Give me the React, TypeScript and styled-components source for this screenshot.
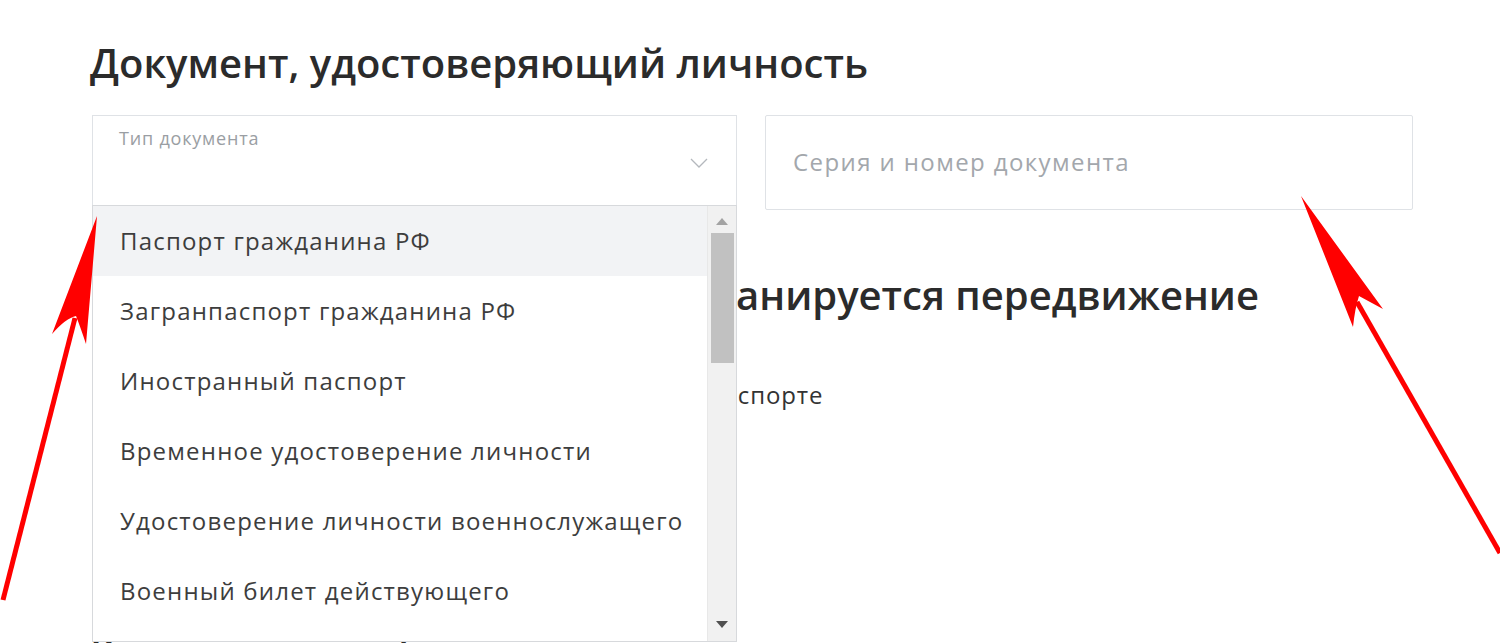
import styled, { createGlobalStyle } from "styled-components";

const GlobalStyle = createGlobalStyle`
    body {
        margin: 0;
        background: #ffffff;
        font-family: 'Open Sans', 'Noto Sans', sans-serif;
        color: #2e2e2e;
        overflow: hidden;
    }
`;

const Page = styled.div`
    position: relative;
    width: 1500px;
    height: 643px;
    overflow: hidden;
    padding: 34px 0 0 92px;
    box-sizing: border-box;
`;

const Heading = styled.h2<{ $top?: number }>`
    margin: ${p => p.$top ?? 0}px 0 0 -2px;
    font-size: 40px;
    font-weight: 600;
    letter-spacing: 0;
    line-height: 58px;
    color: #2b2b2b;
    white-space: nowrap;
`;

const FieldsRow = styled.div`
    display: flex;
    align-items: flex-start;
    gap: 28px;
    margin-top: 23px;
`;

const SelectBox = styled.div`
    position: relative;
    width: 645px;
    height: 90px;
    box-sizing: border-box;
    border: 1px solid #dfe2e6;
    border-bottom: none;
    background: #fff;
`;

const SelectLabel = styled.div`
    position: absolute;
    left: 26px;
    top: 10px;
    font-size: 18px;
    letter-spacing: 0.8px;
    color: #9a9ea3;
`;

const Chevron = styled.svg`
    position: absolute;
    right: 28px;
    top: 42px;
`;

const InputBox = styled.div`
    width: 648px;
    height: 95px;
    box-sizing: border-box;
    border: 1px solid #dfe2e6;
    border-radius: 2px;
    display: flex;
    align-items: center;
    padding: 0 0 2px 27px;
    font-size: 24px;
    letter-spacing: 1.4px;
    color: #a3a7ac;
`;

const Dropdown = styled.div`
    position: absolute;
    left: -1px;
    top: 89px;
    width: 645px;
    height: 437px;
    box-sizing: border-box;
    border: 1px solid #d7d9dc;
    background: #fff;
    display: flex;
    overflow: hidden;
    z-index: 5;
`;

const Options = styled.ul`
    flex: 1;
    margin: 0;
    padding: 0;
    list-style: none;
`;

const Option = styled.li<{ $active?: boolean }>`
    height: 70px;
    display: flex;
    align-items: center;
    padding: 0 0 2px 27px;
    box-sizing: border-box;
    font-size: 24px;
    letter-spacing: 1.2px;
    color: #3d3d3d;
    white-space: nowrap;
    background: ${p => (p.$active ? "#f2f3f5" : "#fff")};
`;

const ScrollTrack = styled.div`
    width: 28px;
    flex-shrink: 0;
    background: #f1f1f1;
    border-left: 1px solid #e8e8e8;
    display: flex;
    flex-direction: column;
    align-items: center;
`;

const ScrollArrow = styled.div<{ $down?: boolean }>`
    width: 0;
    height: 0;
    margin: ${p => (p.$down ? "auto 0 13px" : "12px 0 0")};
    border-left: 6px solid transparent;
    border-right: 6px solid transparent;
    ${p => (p.$down ? "border-top: 7px solid #505050;" : "border-bottom: 7px solid #a3a3a3;")}
`;

const ScrollThumb = styled.div`
    width: 23px;
    height: 130px;
    margin-top: 8px;
    background: #c1c1c1;
`;

const NoteRow = styled.label`
    display: flex;
    align-items: center;
    gap: 16px;
    margin-top: 54px;
    font-size: 24px;
    letter-spacing: 0.9px;
    color: #333;
    white-space: nowrap;
`;

const Checkbox = styled.span`
    width: 24px;
    height: 24px;
    border: 1px solid #c9cdd2;
    border-radius: 3px;
`;

const Arrows = styled.svg`
    position: absolute;
    left: 0;
    top: 0;
    pointer-events: none;
    z-index: 10;
`;

const documentTypes = [
    "Паспорт гражданина РФ",
    "Загранпаспорт гражданина РФ",
    "Иностранный паспорт",
    "Временное удостоверение личности",
    "Удостоверение личности военнослужащего",
    "Военный билет действующего",
    "Военный билет",
];

const App: React.FC = () => {
    return (
        <Page>
            <GlobalStyle />
            <Heading>Документ, удостоверяющий личность</Heading>
            <FieldsRow>
                <SelectBox>
                    <SelectLabel>Тип документа</SelectLabel>
                    <Chevron width="18" height="10" viewBox="0 0 18 10">
                        <path d="M1 1l8 8 8-8" fill="none" stroke="#b4b8bd" strokeWidth="1.3" />
                    </Chevron>
                    <Dropdown>
                        <Options>
                            {documentTypes.map((t, i) => (
                                <Option key={t} $active={i === 0}>{t}</Option>
                            ))}
                        </Options>
                        <ScrollTrack>
                            <ScrollArrow />
                            <ScrollThumb />
                            <ScrollArrow $down />
                        </ScrollTrack>
                    </Dropdown>
                </SelectBox>
                <InputBox>Серия и номер документа</InputBox>
            </FieldsRow>
            <Heading $top={56}>Выберите страны, в которых планируется передвижение</Heading>
            <NoteRow>
                <Checkbox />
                Виза не требуется, если она вклеена в загранпаспорте
            </NoteRow>
            <Heading $top={212}>Контактная информация</Heading>

            <Arrows width="1500" height="643" viewBox="0 0 1500 643">
                <path d="M3 600 L75 318" stroke="#ff0000" strokeWidth="5" fill="none" />
                <path d="M97 216 L52 334 Q66 318 76 316 Q80 326 86 344 Z" fill="#ff0000" />
                <path d="M1500 553 L1357 302" stroke="#ff0000" strokeWidth="5" fill="none" />
                <path d="M1301 196 L1383 309 Q1370 302 1359 296 Q1355 308 1353 327 Z" fill="#ff0000" />
            </Arrows>
        </Page>
    );
};

export default App;
